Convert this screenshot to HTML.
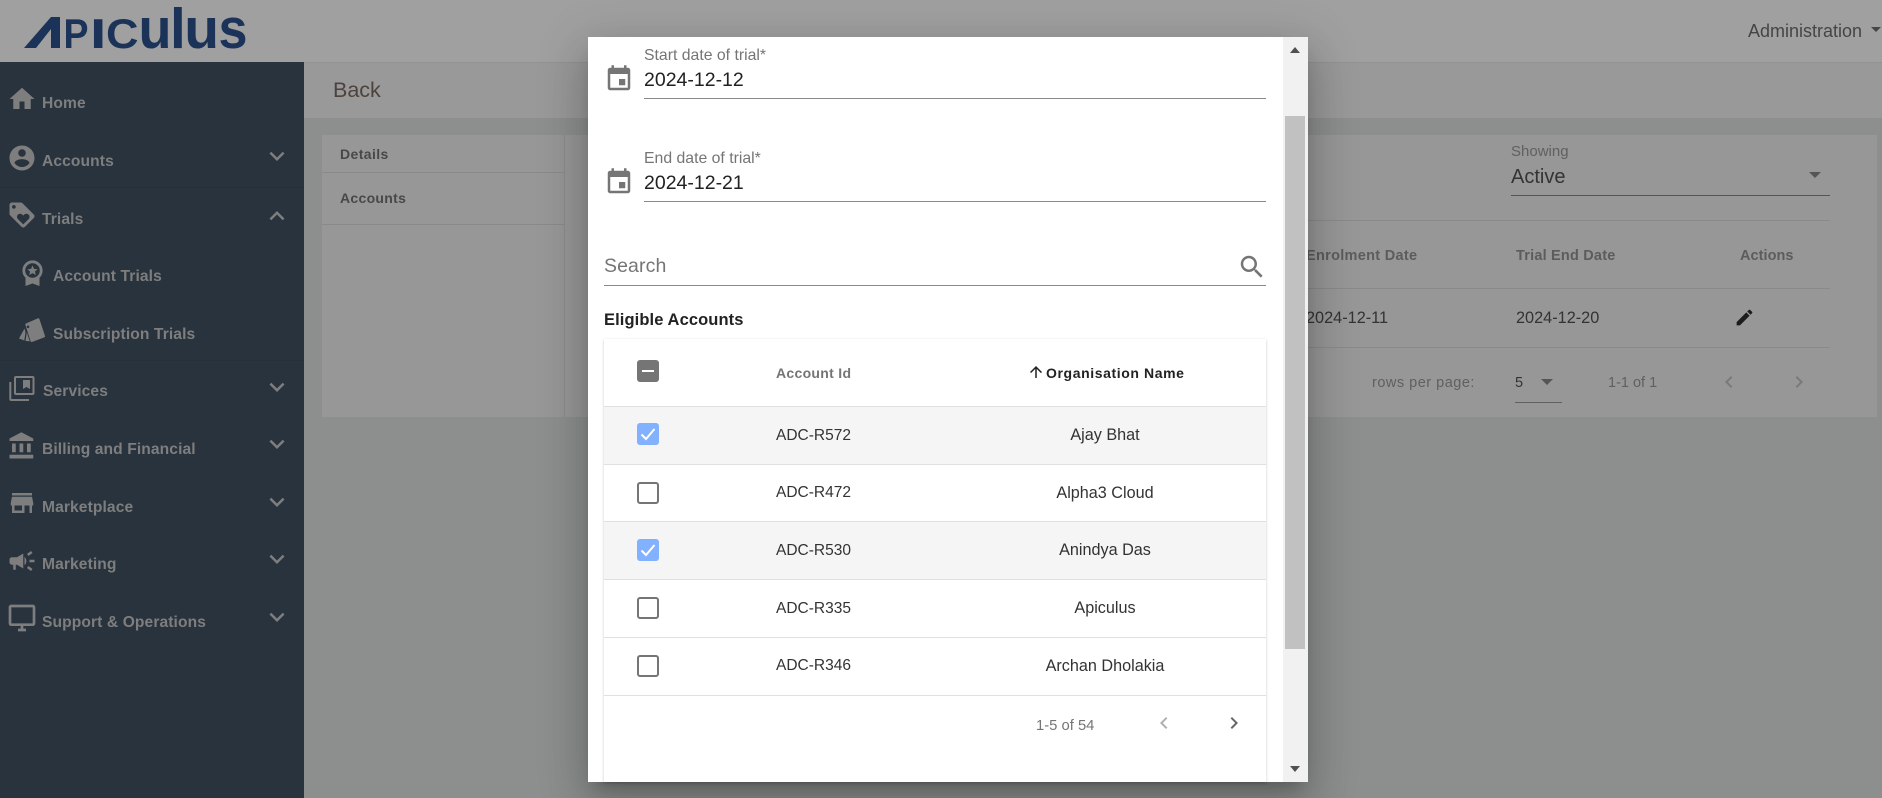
<!DOCTYPE html>
<html lang="en">
<head>
<meta charset="utf-8">
<title>Trials</title>
<style>
html,body{margin:0;padding:0;width:1882px;height:798px;overflow:hidden;background:#8c8f8d;font-family:"Liberation Sans",sans-serif}
.a{position:absolute}
.t{position:absolute;white-space:nowrap;height:24px;line-height:24px}
.s{color:#7e7e7e;font-weight:bold;font-size:15.6px;letter-spacing:.1px}
.h{position:absolute;height:1px}
svg.i{position:absolute;overflow:visible}
.c{position:absolute;left:636.5px;width:22px;height:22px;box-sizing:border-box;border-radius:3px}
.u{border:2.5px solid #757575;background:#fff}
.k{background:#82b1ff}
.m{font-size:15.5px;color:#333}
.n{font-size:16.2px;color:#333;left:964px;width:282px;text-align:center}
.l{font-family:"Liberation Sans",sans-serif;font-weight:bold;fill:#1b3358}
</style>
</head>
<body>
<div class="a" style="left:0;top:0;width:1882px;height:62px;background:#a0a0a0"></div>
<svg class="a" style="left:0;top:0" width="260" height="60">
  <polygon points="24,48 51,17 60,17 60,48 51,48 51,29 36,48" fill="#1b3358"/>
  <text class="l" x="63.500" y="48" font-size="42" textLength="25" lengthAdjust="spacingAndGlyphs">P</text>
  <text class="l" x="90" y="48" font-size="42" textLength="16.400" lengthAdjust="spacingAndGlyphs">I</text>
  <text class="l" x="106" y="48" font-size="42" textLength="32.500" lengthAdjust="spacingAndGlyphs">C</text>
  <text class="l" x="138.500" y="48" font-size="57" textLength="33" lengthAdjust="spacingAndGlyphs">u</text>
  <text class="l" x="170" y="48" font-size="57">l</text>
  <text class="l" x="184.300" y="48" font-size="57">u</text>
  <text class="l" x="218.500" y="48" font-size="57" textLength="29" lengthAdjust="spacingAndGlyphs">s</text>
</svg>
<div class="t" style="left:1748px;top:19px;font-size:18px;color:#454545">Administration</div>
<div class="a" style="left:1871px;top:27px;border-left:5px solid transparent;border-right:5px solid transparent;border-top:5px solid #454545"></div>

<div class="a" style="left:0;top:62px;width:304px;height:736px;background:#29333e"></div>
<div class="h" style="left:0;top:187px;width:304px;background:#27303a"></div>
<div class="h" style="left:0;top:360px;width:304px;background:#27303a"></div>

<svg class="i" style="left:7px;top:84px" width="30" height="30" viewBox="0 0 24 24" fill="#7e7e7e"><path d="M10 20v-6h4v6h5v-8h3L12 3 2 12h3v8z"/></svg>
<div class="t s" style="left:42px;top:92px">Home</div>
<svg class="i" style="left:7px;top:143px" width="30" height="30" viewBox="0 0 24 24" fill="#7e7e7e"><path d="M12 2C6.48 2 2 6.48 2 12s4.48 10 10 10 10-4.48 10-10S17.52 2 12 2zm0 3c1.66 0 3 1.34 3 3s-1.34 3-3 3-3-1.34-3-3 1.34-3 3-3zm0 14.2c-2.5 0-4.71-1.28-6-3.22.03-1.99 4-3.08 6-3.08 1.99 0 5.97 1.09 6 3.08-1.29 1.94-3.5 3.22-6 3.22z"/></svg>
<div class="t s" style="left:42px;top:150px">Accounts</div>
<svg class="i" style="left:7px;top:199.5px" width="30" height="30" viewBox="0 0 24 24" fill="#7e7e7e"><path d="M21.41 11.58l-9-9C12.05 2.22 11.55 2 11 2H4c-1.1 0-2 .9-2 2v7c0 .55.22 1.05.59 1.42l9 9c.36.36.86.58 1.41.58s1.05-.22 1.41-.59l7-7c.37-.36.59-.86.59-1.41s-.23-1.06-.59-1.42zM5.5 7C4.67 7 4 6.33 4 5.5S4.67 4 5.5 4 7 4.67 7 5.5 6.33 7 5.5 7zm11.77 8.27L13 19.54l-4.27-4.27C8.28 14.81 8 14.19 8 13.5c0-1.38 1.12-2.5 2.5-2.5.69 0 1.32.28 1.77.74l.73.72.73-.73c.45-.45 1.08-.73 1.77-.73 1.38 0 2.5 1.12 2.5 2.5 0 .69-.28 1.32-.73 1.77z"/></svg>
<div class="t s" style="left:42px;top:208px">Trials</div>
<svg class="i" style="left:22px;top:260px" width="21" height="26" viewBox="0 0 21 26"><path d="M3.500 15l0 11 7-2.500 7 2.500 0-11z" fill="#7e7e7e"/><circle cx="10.500" cy="10.500" r="8.700" fill="#29333e" stroke="#7e7e7e" stroke-width="2.800"/><path d="M10.500 5.500l1.500 3.400 3.600.3-2.700 2.300.9 3.500-3.300-1.900-3.300 1.900.9-3.500-2.700-2.300 3.600-.3z" fill="#7e7e7e"/></svg>
<div class="t s" style="left:53px;top:265px">Account Trials</div>
<svg class="i" style="left:0;top:300px" width="60" height="50" viewBox="0 0 60 50" fill="#7e7e7e"><path d="M19 38.500l5.500-10 1 4-1.200 8z"/><path d="M25.500 41l1.300-8.500 3 8.800z"/><path fill-rule="evenodd" d="M26 23.500L38 18.300q1-.4 1.400.7L45 36q.3 1-.7 1.400L32 42q-1 .3-1.400-.7L25.300 24.800q-.2-1 .7-1.300zM28 25.500a1.300 1.300 0 1 0 .01 0z"/></svg>
<div class="t s" style="left:53px;top:323px">Subscription Trials</div>
<svg class="i" style="left:0;top:370px" width="40" height="35" viewBox="0 0 40 35" fill="none" stroke="#7e7e7e" stroke-width="2"><rect x="15" y="7" width="18.500" height="17" rx="1"/><path d="M10.300 12v17q0 1 1 1h17.700"/><path d="M23 10h7v9l-3.500-2-3.500 2z" fill="#7e7e7e" stroke="none"/></svg>
<div class="t s" style="left:43px;top:380px">Services</div>
<svg class="i" style="left:7px;top:431px" width="30" height="30" viewBox="0 0 24 24" fill="#7e7e7e"><path d="M4 10v7h3v-7H4zm6 0v7h3v-7h-3zM2 22h19v-3H2v3zm14-12v7h3v-7h-3zm-4.500-9L2 6v2h19V6l-9.500-5z"/></svg>
<div class="t s" style="left:42px;top:438px">Billing and Financial</div>
<svg class="i" style="left:7px;top:488px" width="30" height="30" viewBox="0 0 24 24" fill="#7e7e7e"><path d="M20 4H4v2h16V4zm1 10v-2l-1-5H4l-1 5v2h1v6h10v-6h4v6h2v-6h1zm-9 4H6v-4h6v4z"/></svg>
<div class="t s" style="left:42px;top:496px">Marketplace</div>
<svg class="i" style="left:7px;top:546px" width="30" height="30" viewBox="0 0 24 24" fill="#7e7e7e"><path d="M18 11v2h4v-2h-4zm-2 6.610c.96.71 2.210 1.650 3.200 2.390.4-.53.8-1.070 1.200-1.600-.99-.74-2.240-1.680-3.200-2.400-.4.54-.8 1.080-1.200 1.610zM20.400 5.600c-.4-.53-.8-1.070-1.200-1.600-.99.74-2.240 1.680-3.200 2.400.4.53.8 1.070 1.200 1.600.96-.72 2.210-1.650 3.200-2.400zM4 9c-1.100 0-2 .9-2 2v2c0 1.100.9 2 2 2h1v4h2v-4h1l5 3V6L8 9H4zm11.500 3c0-1.330-.58-2.530-1.500-3.350v6.690c.92-.81 1.500-2.010 1.500-3.340z"/></svg>
<div class="t s" style="left:42px;top:553px">Marketing</div>
<svg class="i" style="left:5.500px;top:602px" width="32" height="32" viewBox="0 0 24 24" fill="#7e7e7e"><path d="M20 2H4c-1.100 0-2 .9-2 2v12c0 1.100.9 2 2 2h7v2H9v2h6v-2h-2v-2h7c1.100 0 2-.9 2-2V4c0-1.100-.9-2-2-2zm0 14H4V4h16v12z"/></svg>
<div class="t s" style="left:42px;top:611px">Support &amp; Operations</div>

<svg class="i" style="left:262px;top:141px" width="30" height="30" viewBox="0 0 24 24" fill="#7e7e7e"><path d="M16.590 8.590L12 13.170 7.410 8.590 6 10l6 6 6-6z"/></svg>
<svg class="i" style="left:262px;top:201px" width="30" height="30" viewBox="0 0 24 24" fill="#7e7e7e"><path d="M12 8l-6 6 1.410 1.410L12 10.830l4.590 4.580L18 14z"/></svg>
<svg class="i" style="left:262px;top:372px" width="30" height="30" viewBox="0 0 24 24" fill="#7e7e7e"><path d="M16.590 8.590L12 13.170 7.410 8.590 6 10l6 6 6-6z"/></svg>
<svg class="i" style="left:262px;top:429px" width="30" height="30" viewBox="0 0 24 24" fill="#7e7e7e"><path d="M16.590 8.590L12 13.170 7.410 8.590 6 10l6 6 6-6z"/></svg>
<svg class="i" style="left:262px;top:487px" width="30" height="30" viewBox="0 0 24 24" fill="#7e7e7e"><path d="M16.590 8.590L12 13.170 7.410 8.590 6 10l6 6 6-6z"/></svg>
<svg class="i" style="left:262px;top:544px" width="30" height="30" viewBox="0 0 24 24" fill="#7e7e7e"><path d="M16.590 8.590L12 13.170 7.410 8.590 6 10l6 6 6-6z"/></svg>
<svg class="i" style="left:262px;top:602px" width="30" height="30" viewBox="0 0 24 24" fill="#7e7e7e"><path d="M16.590 8.590L12 13.170 7.410 8.590 6 10l6 6 6-6z"/></svg>

<div class="a" style="left:304px;top:62px;width:1578px;height:56px;background:#999;border-top:1px solid #929292;box-sizing:border-box"></div>
<div class="t" style="left:333px;top:78px;font-size:21.500px;color:#4e423e">Back</div>
<div class="a" style="left:322px;top:135px;width:1555px;height:282px;background:#979797"></div>
<div class="a" style="left:564px;top:135px;width:1px;height:282px;background:#8c8c8c"></div>
<div class="t" style="left:340px;top:142px;font-size:14px;font-weight:bold;color:#484848;letter-spacing:.4px">Details</div>
<div class="h" style="left:322px;top:172px;width:242px;background:#8a8a8a"></div>
<div class="t" style="left:340px;top:186px;font-size:14px;font-weight:bold;color:#484848;letter-spacing:.3px">Accounts</div>
<div class="h" style="left:322px;top:224px;width:242px;background:#8a8a8a"></div>

<div class="t" style="left:1511px;top:140px;font-size:15px;color:#606060">Showing</div>
<div class="t" style="left:1511px;top:165px;font-size:20px;color:#333">Active</div>
<div class="a" style="left:1809px;top:172px;border-left:6px solid transparent;border-right:6px solid transparent;border-top:6px solid #555"></div>
<div class="h" style="left:1511px;top:195px;width:319px;background:#555"></div>
<div class="h" style="left:1306px;top:220px;width:524px;background:#8a8a8a"></div>
<div class="t" style="left:1306px;top:244px;font-size:14.500px;font-weight:bold;color:#5c5c5c;letter-spacing:.3px">Enrolment Date</div>
<div class="t" style="left:1516px;top:244px;font-size:14.500px;font-weight:bold;color:#5c5c5c;letter-spacing:.2px">Trial End Date</div>
<div class="t" style="left:1740px;top:244px;font-size:14.500px;font-weight:bold;color:#5c5c5c;letter-spacing:.05px">Actions</div>
<div class="h" style="left:1306px;top:288px;width:524px;background:#8a8a8a"></div>
<div class="t" style="left:1306px;top:306px;font-size:16.300px;color:#333">2024-12-11</div>
<div class="t" style="left:1516px;top:306px;font-size:16.300px;color:#333">2024-12-20</div>
<svg class="i" style="left:1734px;top:306.500px" width="21" height="21" viewBox="0 0 24 24" fill="#1c1c1c"><path d="M3 17.250V21h3.750L17.810 9.940l-3.750-3.750L3 17.250zM20.710 7.040c.39-.39.39-1.020 0-1.410l-2.340-2.340c-.39-.39-1.020-.39-1.410 0l-1.830 1.830 3.750 3.750 1.830-1.830z"/></svg>
<div class="h" style="left:1306px;top:347px;width:524px;background:#8a8a8a"></div>
<div class="t" style="left:1372px;top:371px;font-size:14.500px;color:#606060;letter-spacing:.5px">rows per page:</div>
<div class="t" style="left:1515px;top:371px;font-size:14.500px;color:#333">5</div>
<div class="a" style="left:1541px;top:379px;border-left:6px solid transparent;border-right:6px solid transparent;border-top:6px solid #555"></div>
<div class="h" style="left:1515px;top:402px;width:47px;background:#606060"></div>
<div class="t" style="left:1608px;top:371px;font-size:14.500px;color:#606060">1-1 of 1</div>
<svg class="i" style="left:1717px;top:370px" width="24" height="24" viewBox="0 0 24 24" fill="#7a7a7a"><path d="M15.410 7.410L14 6l-6 6 6 6 1.410-1.410L10.830 12z"/></svg>
<svg class="i" style="left:1787px;top:370px" width="24" height="24" viewBox="0 0 24 24" fill="#7a7a7a"><path d="M10 6L8.590 7.410 13.170 12l-4.580 4.590L10 18l6-6z"/></svg>

<div class="a" style="left:588px;top:37px;width:720px;height:745px;background:#fff;box-shadow:0 11px 15px -7px rgba(0,0,0,.2),0 24px 38px 3px rgba(0,0,0,.14),0 9px 46px 8px rgba(0,0,0,.12)"></div>
<div class="a" style="left:1283px;top:37px;width:25px;height:745px;background:#f1f1f1"></div>
<div class="a" style="left:1285px;top:116px;width:20px;height:533px;background:#c1c1c1"></div>
<div class="a" style="left:1290px;top:47px;border-left:5.500px solid transparent;border-right:5.500px solid transparent;border-bottom:6px solid #505050"></div>
<div class="a" style="left:1290px;top:766px;border-left:5.500px solid transparent;border-right:5.500px solid transparent;border-top:6px solid #505050"></div>

<div class="t" style="left:644px;top:44px;font-size:15.800px;color:#757575">Start date of trial*</div>
<div class="t" style="left:644px;top:68px;font-size:19.500px;color:#222">2024-12-12</div>
<div class="h" style="left:644px;top:98px;width:622px;background:#8a8a8a"></div>
<svg class="i" style="left:604px;top:63.700px" width="30" height="30" viewBox="0 0 24 24" fill="#757575"><path d="M17 12h-5v5h5v-5zM16 1v2H8V1H6v2H5c-1.110 0-1.990.9-1.990 2L3 19c0 1.100.89 2 2 2h14c1.100 0 2-.9 2-2V5c0-1.100-.9-2-2-2h-1V1h-2zm3 18H5V8h14v11z"/></svg>

<div class="t" style="left:644px;top:147px;font-size:15.800px;color:#757575">End date of trial*</div>
<div class="t" style="left:644px;top:171px;font-size:19.500px;color:#222">2024-12-21</div>
<div class="h" style="left:644px;top:201px;width:622px;background:#8a8a8a"></div>
<svg class="i" style="left:604px;top:166.700px" width="30" height="30" viewBox="0 0 24 24" fill="#757575"><path d="M17 12h-5v5h5v-5zM16 1v2H8V1H6v2H5c-1.110 0-1.990.9-1.990 2L3 19c0 1.100.89 2 2 2h14c1.100 0 2-.9 2-2V5c0-1.100-.9-2-2-2h-1V1h-2zm3 18H5V8h14v11z"/></svg>

<div class="t" style="left:604px;top:254px;font-size:19.500px;color:#757575;letter-spacing:.1px">Search</div>
<svg class="i" style="left:1236.500px;top:252px" width="30" height="30" viewBox="0 0 24 24" fill="#757575"><path d="M15.500 14h-.79l-.28-.27C15.410 12.590 16 11.110 16 9.500 16 5.910 13.090 3 9.500 3S3 5.910 3 9.500 5.910 16 9.500 16c1.610 0 3.090-.59 4.230-1.570l.27.28v.79l5 4.990L20.490 19l-4.990-5zm-6 0C7.010 14 5 11.990 5 9.500S7.010 5 9.500 5 14 7.010 14 9.500 11.990 14 9.500 14z"/></svg>
<div class="h" style="left:604px;top:285px;width:662px;background:#8a8a8a"></div>
<div class="t" style="left:604px;top:308px;font-size:16.500px;font-weight:bold;color:#222;letter-spacing:.1px">Eligible Accounts</div>

<div class="a" style="left:604px;top:339px;width:662px;height:443px;background:#fff;box-shadow:0 1px 3px rgba(0,0,0,.2)"></div>
<div class="c" style="top:360px;background:#757575"></div>
<div class="a" style="left:641.500px;top:369.500px;width:12px;height:2.500px;background:#fff"></div>
<div class="t" style="left:776px;top:361px;font-size:14px;font-weight:bold;color:#757575;letter-spacing:.3px">Account Id</div>
<svg class="i" style="left:1027px;top:363px" width="18" height="18" viewBox="0 0 24 24" fill="#222"><path d="M4 12l1.410 1.410L11 7.830V20h2V7.830l5.580 5.590L20 12l-8-8-8 8z"/></svg>
<div class="t" style="left:1046px;top:361px;font-size:14px;font-weight:bold;color:#222;letter-spacing:.6px">Organisation Name</div>

<div class="h" style="left:604px;top:406px;width:662px;background:#e0e0e0"></div>
<div class="a" style="left:604px;top:407px;width:662px;height:57px;background:#f5f5f5"></div>
<div class="h" style="left:604px;top:464px;width:662px;background:#e0e0e0"></div>
<div class="h" style="left:604px;top:521px;width:662px;background:#e0e0e0"></div>
<div class="a" style="left:604px;top:522px;width:662px;height:57px;background:#f5f5f5"></div>
<div class="h" style="left:604px;top:579px;width:662px;background:#e0e0e0"></div>
<div class="h" style="left:604px;top:637px;width:662px;background:#e0e0e0"></div>
<div class="h" style="left:604px;top:695px;width:662px;background:#e0e0e0"></div>

<div class="c k" style="top:423px"><svg width="22" height="22" viewBox="0 0 22 22"><path d="M4.500 11.500l4.500 4.500 8.500-10" fill="none" stroke="#fff" stroke-width="2"/></svg></div>
<div class="t m" style="left:776px;top:424px">ADC-R572</div>
<div class="t n" style="top:423px">Ajay Bhat</div>

<div class="c u" style="top:481.500px"></div>
<div class="t m" style="left:776px;top:481px">ADC-R472</div>
<div class="t n" style="top:481px">Alpha3 Cloud</div>

<div class="c k" style="top:538.500px"><svg width="22" height="22" viewBox="0 0 22 22"><path d="M4.500 11.500l4.500 4.500 8.500-10" fill="none" stroke="#fff" stroke-width="2"/></svg></div>
<div class="t m" style="left:776px;top:539px">ADC-R530</div>
<div class="t n" style="top:538px">Anindya Das</div>

<div class="c u" style="top:596.500px"></div>
<div class="t m" style="left:776px;top:597px">ADC-R335</div>
<div class="t n" style="top:596px">Apiculus</div>

<div class="c u" style="top:654.500px"></div>
<div class="t m" style="left:776px;top:654px">ADC-R346</div>
<div class="t n" style="top:654px">Archan Dholakia</div>

<div class="t" style="left:1036px;top:714px;font-size:14.800px;color:#757575">1-5 of 54</div>
<svg class="i" style="left:1152px;top:711px" width="24" height="24" viewBox="0 0 24 24" fill="#b0b0b0"><path d="M15.410 7.410L14 6l-6 6 6 6 1.410-1.410L10.830 12z"/></svg>
<svg class="i" style="left:1222px;top:711px" width="24" height="24" viewBox="0 0 24 24" fill="#666"><path d="M10 6L8.590 7.410 13.170 12l-4.580 4.590L10 18l6-6z"/></svg>
</body>
</html>
